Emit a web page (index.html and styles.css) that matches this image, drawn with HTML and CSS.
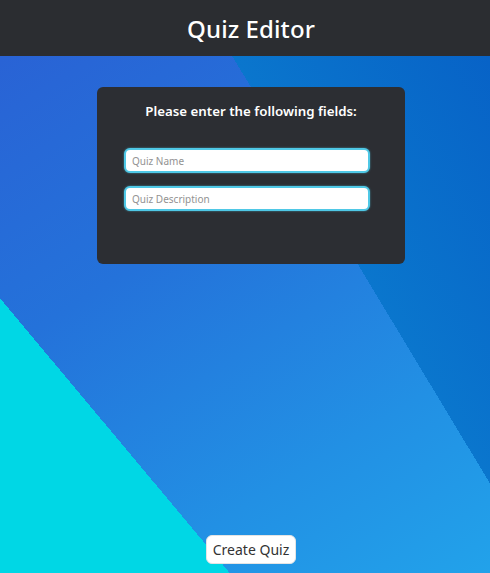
FILE: index.html
```html
<!DOCTYPE html>
<html lang="en">
<head>
<meta charset="utf-8">
<title>Quiz Editor</title>
<link rel="stylesheet" href="styles.css">
</head>
<body>
<header class="topbar">
  <h1 class="title">Quiz Editor</h1>
</header>
<main class="content">
  <section class="card">
    <h2 class="card-heading">Please enter the following fields:</h2>
    <form class="fields">
      <input class="field" type="text" placeholder="Quiz Name">
      <input class="field" type="text" placeholder="Quiz Description">
    </form>
  </section>
  <div class="actions">
    <button class="create-btn" type="button">Create Quiz</button>
  </div>
</main>
</body>
</html>
```

FILE: styles.css
```css
html, body {
  margin: 0;
  padding: 0;
}

body {
  width: 490px;
  height: 573px;
  overflow: hidden;
  display: flex;
  flex-direction: column;
  font-family: "Noto Sans", "DejaVu Sans", sans-serif;
  background-color: #2470da;
  background-image:
    linear-gradient(230.1deg, transparent 76.3%, #00d7e5 76.3%),
    linear-gradient(58.9deg, transparent 65.1%, #0a76cd 65.1%, #0760c6 100%),
    linear-gradient(148deg, #2a60d4 0%, #2472da 40%, #2290e4 75%, #22a2ea 100%);
}

.topbar {
  height: 56px;
  flex: none;
  box-sizing: border-box;
  padding-left: 12px;
  background: #2b2d31;
  display: flex;
  align-items: center;
  justify-content: center;
}

.title {
  margin: 0;
  color: #ffffff;
  font-size: 24px;
  font-weight: 500;
  letter-spacing: 0.1px;
}

.content {
  flex: 1;
  box-sizing: border-box;
  padding-left: 12px;
  display: flex;
  flex-direction: column;
  align-items: center;
}

.card {
  margin-top: 31px;
  width: 308px;
  height: 177px;
  box-sizing: border-box;
  padding-top: 15px;
  background: #2c2e33;
  border-radius: 6px;
  display: flex;
  flex-direction: column;
  align-items: center;
}

.card-heading {
  margin: 0;
  color: #ffffff;
  font-size: 13.3px;
  font-weight: 600;
  line-height: 18px;
}

.fields {
  margin-top: 28px;
  margin-right: 8px;
  display: flex;
  flex-direction: column;
  gap: 13px;
}

.field {
  width: 246px;
  height: 25px;
  box-sizing: border-box;
  margin: 0;
  padding: 0 6px;
  border: 2px solid #4fc8e6;
  border-radius: 6px;
  background: #ffffff;
  font-family: inherit;
  font-size: 10px;
  color: #333;
  outline: none;
  box-shadow: 0 0 2px rgba(79, 200, 230, 0.7);
}

.field::placeholder {
  color: #929292;
}

.actions {
  margin-top: auto;
  margin-bottom: 9px;
}

.create-btn {
  height: 29px;
  padding: 0 6px;
  border: 1px solid #e4e4e4;
  border-radius: 6px;
  background: #ffffff;
  color: #333333;
  font-family: inherit;
  font-size: 14px;
  cursor: pointer;
}
```
